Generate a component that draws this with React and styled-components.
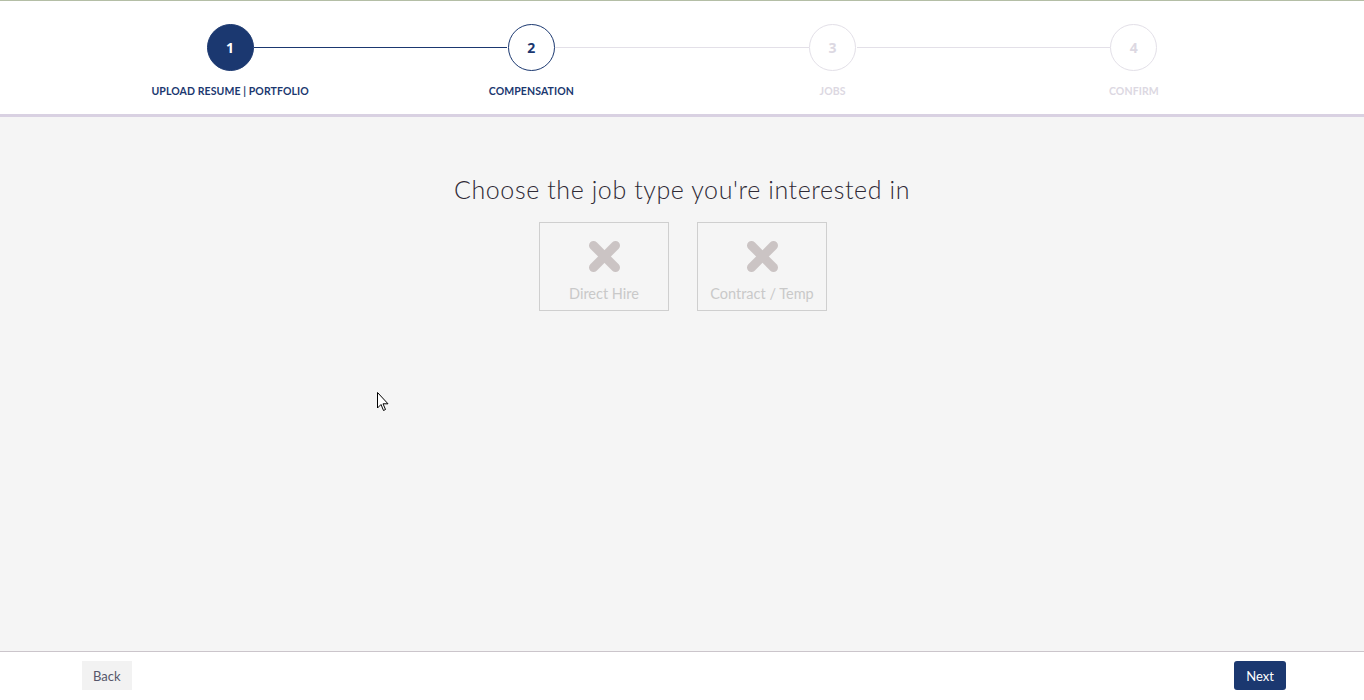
import React from 'react';
import styled, { createGlobalStyle } from 'styled-components';

const COLORS = {
  navy: '#1b3870',
  faded: '#e3e0e8',
  fadedText: '#dcd8e2',
  page: '#f5f5f5',
  card: '#cfcfcf',
  cardText: '#c9c9c9',
  cross: '#cbc4c4',
};

const GlobalStyle = createGlobalStyle`
  *, *::before, *::after {
    box-sizing: border-box;
  }
  html, body {
    margin: 0;
    padding: 0;
    background: ${COLORS.page};
  }
  body {
    font-family: 'Lato', 'Open Sans', sans-serif;
  }
`;

const Page = styled.div`
  position: relative;
  display: flex;
  flex-direction: column;
  height: 700px;
  border-top: 1px solid #b4bea6;
`;

const Header = styled.header`
  background: #fff;
  height: 116px;
  flex-shrink: 0;
  border-bottom: 3px solid #d9d1e2;
  display: flex;
  justify-content: center;
`;

const Steps = styled.ol`
  list-style: none;
  margin: 0;
  padding: 0;
  width: 1205px;
  display: grid;
  grid-template-columns: repeat(4, 1fr);
`;

const Step = styled.li`
  position: relative;
  display: flex;
  flex-direction: column;
  align-items: center;
  padding-top: 23px;

  /* connector to the next step */
  &:not(:last-child)::after {
    content: '';
    position: absolute;
    top: 46px;
    left: calc(50% + 24px);
    width: calc(100% - 48px);
    height: 1px;
    background: ${props => (props.linked ? COLORS.navy : COLORS.faded)};
  }
`;

const Circle = styled.div`
  width: 47px;
  height: 47px;
  border-radius: 50%;
  display: flex;
  align-items: center;
  justify-content: center;
  font-family: 'Open Sans', sans-serif;
  font-weight: 700;
  font-size: 14px;
  background: ${props => (props.state === 'done' ? COLORS.navy : '#fff')};
  color: ${props =>
    props.state === 'done' ? '#fff' : props.state === 'current' ? COLORS.navy : COLORS.fadedText};
  border: 1px solid ${props => (props.state === 'todo' ? COLORS.faded : COLORS.navy)};
`;

const StepLabel = styled.div`
  margin-top: 14px;
  font-family: 'Lato', sans-serif;
  font-weight: 700;
  font-size: 10.5px;
  letter-spacing: 0.1px;
  color: ${props => (props.state === 'todo' ? COLORS.fadedText : COLORS.navy)};
`;

const Main = styled.main`
  flex: 1;
  background: ${COLORS.page};
  display: flex;
  flex-direction: column;
  align-items: center;
  padding-top: 57px;
`;

const Title = styled.h1`
  margin: 0;
  font-family: 'Lato', sans-serif;
  font-weight: 300;
  font-size: 25px;
  letter-spacing: 0.6px;
  color: #2f2a36;
`;

const Options = styled.div`
  display: flex;
  gap: 28px;
  margin-top: 18px;
  padding-left: 2px;
`;

const Option = styled.button`
  width: 130px;
  height: 89px;
  border: 1px solid ${COLORS.card};
  background: transparent;
  display: flex;
  flex-direction: column;
  align-items: center;
  padding: 17px 0 0;
  cursor: pointer;
`;

const OptionLabel = styled.span`
  margin-top: 12px;
  font-family: 'Lato', sans-serif;
  font-size: 14.5px;
  color: ${COLORS.cardText};
`;

const Footer = styled.footer`
  background: #fff;
  height: 49px;
  flex-shrink: 0;
  border-top: 1px solid #cbc5cb;
  display: flex;
  align-items: flex-start;
  justify-content: space-between;
  padding: 9px 78px 0 82px;
`;

const NavButton = styled.button`
  height: 29px;
  padding: 0 ${props => (props.primary ? 12 : 11)}px;
  border: none;
  border-radius: ${props => (props.primary ? '3px' : '0')};
  font-family: 'Lato', sans-serif;
  font-size: 13px;
  background: ${props => (props.primary ? COLORS.navy : '#f2f2f2')};
  color: ${props => (props.primary ? '#fff' : '#56566a')};
`;

const Pointer = styled.svg`
  position: absolute;
  left: 377px;
  top: 391px;
  pointer-events: none;
`;

const Cross = () => (
  <svg width="33" height="33" viewBox="0 0 33 33">
    <g stroke={COLORS.cross} strokeWidth="9" strokeLinecap="round">
      <line x1="5.5" y1="5.5" x2="27.5" y2="27.5" />
      <line x1="27.5" y1="5.5" x2="5.5" y2="27.5" />
    </g>
  </svg>
);

const STEPS = [
  { label: 'UPLOAD RESUME | PORTFOLIO', state: 'done' },
  { label: 'COMPENSATION', state: 'current' },
  { label: 'JOBS', state: 'todo' },
  { label: 'CONFIRM', state: 'todo' },
];

const JOB_TYPES = ['Direct Hire', 'Contract / Temp'];

export default function App() {
  return (
    <Page>
      <GlobalStyle />
      <Header>
        <Steps>
          {STEPS.map((step, i) => (
            <Step key={step.label} linked={step.state === 'done'}>
              <Circle state={step.state}>{i + 1}</Circle>
              <StepLabel state={step.state}>{step.label}</StepLabel>
            </Step>
          ))}
        </Steps>
      </Header>
      <Main>
        <Title>Choose the job type you're interested in</Title>
        <Options>
          {JOB_TYPES.map(type => (
            <Option key={type}>
              <Cross />
              <OptionLabel>{type}</OptionLabel>
            </Option>
          ))}
        </Options>
      </Main>
      <Footer>
        <NavButton>Back</NavButton>
        <NavButton primary>Next</NavButton>
      </Footer>
      <Pointer width="12" height="20" viewBox="0 0 12 20">
        <path d="M0.5 0.5 L0.5 16 L4 12.5 L6.5 18.5 L8.5 17.5 L6 11.8 L11 11.8 Z" fill="#fff" stroke="#000" strokeWidth="1" />
      </Pointer>
    </Page>
  );
}
